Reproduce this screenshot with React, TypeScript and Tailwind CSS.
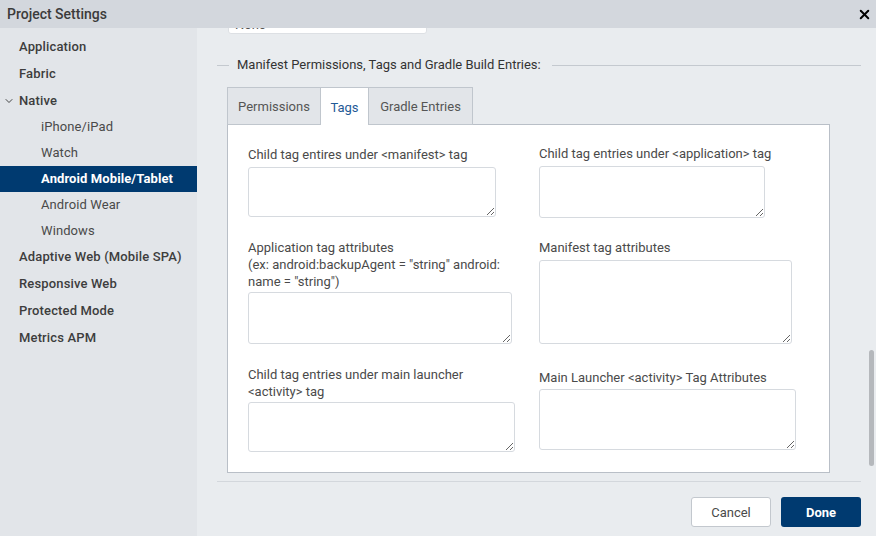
import { ChevronDown, X } from "lucide-react";

const font = { fontFamily: "Roboto, 'Liberation Sans', sans-serif" };

const topItems = ["Application", "Fabric"];
const nativeItems = ["iPhone/iPad", "Watch", "Android Mobile/Tablet", "Android Wear", "Windows"];
const bottomItems = ["Adaptive Web (Mobile SPA)", "Responsive Web", "Protected Mode", "Metrics APM"];

const Field = ({
  label,
  w,
  h,
  gap,
  top,
}: {
  label: React.ReactNode;
  w: string;
  h: string;
  gap: string;
  top: string;
}) => (
  <div className={`flex flex-col ${top}`}>
    <div className="text-[13px] leading-[17px] text-[#4a4a4a]">{label}</div>
    <textarea className={`${gap} ${w} ${h} border border-[#d6dadf] rounded-[3px] bg-white outline-none`} />
  </div>
);

const App = () => {
  return (
    <div style={font} className="w-[876px] h-[536px] flex flex-col overflow-hidden bg-[#e9ecef]">
      <div className="h-[28px] shrink-0 bg-[#d3d7dd] flex items-center justify-between pl-[7px] pr-[4px]">
        <span className="text-[14px] font-medium text-[#3b3b3b]">Project Settings</span>
        <X size={15} strokeWidth={3.2} className="text-black" />
      </div>

      <div className="flex flex-1 min-h-0">
        <div className="w-[197px] shrink-0 bg-[#e2e5e9] pt-[5px]">
          {topItems.map((t) => (
            <div key={t} className="h-[27px] flex items-center pl-[19px] text-[13px] font-medium tracking-[0.15px] text-[#3d3d3d]">
              {t}
            </div>
          ))}
          <div className="h-[27px] flex items-center pl-[3px] text-[13px] font-medium tracking-[0.15px] text-[#3d3d3d]">
            <ChevronDown size={12} strokeWidth={1.8} className="mr-[4px] text-[#333]" />
            Native
          </div>
          {nativeItems.map((t) =>
            t === "Android Mobile/Tablet" ? (
              <div key={t} className="h-[26px] flex items-center pl-[41px] text-[13px] font-bold tracking-[0.1px] text-white bg-[#003a70]">
                {t}
              </div>
            ) : (
              <div key={t} className="h-[26px] flex items-center pl-[41px] text-[13px] tracking-[0.1px] text-[#4a4a4a]">
                {t}
              </div>
            )
          )}
          <div className="-mt-px">
            {bottomItems.map((t) => (
              <div key={t} className="h-[27px] flex items-center pl-[19px] text-[13px] font-medium tracking-[0.15px] text-[#3d3d3d]">
                {t}
              </div>
            ))}
          </div>
        </div>

        <div className="flex-1 relative flex flex-col">
          <div className="ml-[31px] w-[199px] h-[6px] overflow-hidden">
            <div className="-mt-[12px] h-[18px] bg-white border border-[#dde0e4] rounded-[3px] px-[6px] text-[13px] leading-[16px] text-[#555]">
              None
            </div>
          </div>

          <div className="mt-[21px] ml-[20px] mr-[15px] h-[20px] flex items-center">
            <div className="w-[12px] h-px bg-[#c4c9cf]" />
            <span className="ml-[8px] mr-[11px] text-[13px] text-[#333]">
              Manifest Permissions, Tags and Gradle Build Entries:
            </span>
            <div className="flex-1 h-px bg-[#c4c9cf]" />
          </div>

          <div className="mt-[12px] ml-[30px] w-[603px]">
            <div className="flex h-[38px] relative z-10">
              <div className="w-[94px] border border-[#c0c6cd] bg-[#e2e5e9] flex items-center justify-center pt-px text-[13px] text-[#555]">
                Permissions
              </div>
              <div className="w-[47px] border-t border-[#c0c6cd] bg-white flex items-center justify-center pt-px text-[13px] text-[#1f5a96] h-[39px]">
                Tags
              </div>
              <div className="w-[105px] border border-[#c0c6cd] bg-[#e2e5e9] flex items-center justify-center pt-px text-[13px] text-[#555]">
                Gradle Entries
              </div>
            </div>
            <div className="-mt-px h-[349px] bg-white border border-[#b9bfc7] flex pl-[20px] pt-[21px]">
              <div className="w-[291px] flex flex-col">
                <Field label="Child tag entires under <manifest> tag" w="w-[248px]" h="h-[50px]" gap="mt-[4px]" top="" />
                <Field
                  label={
                    <>
                      Application tag attributes
                      <br />
                      (ex: android:backupAgent = "string" android:
                      <br />
                      name = "string")
                    </>
                  }
                  w="w-[264px]"
                  h="h-[52px]"
                  gap="mt-[2px]"
                  top="mt-[22px]"
                />
                <Field
                  label={
                    <>
                      Child tag entries under main launcher
                      <br />
                      &lt;activity&gt; tag
                    </>
                  }
                  w="w-[267px]"
                  h="h-[50px]"
                  gap="mt-[2px]"
                  top="mt-[22px]"
                />
              </div>
              <div className="flex flex-col -mt-px">
                <Field label="Child tag entries under <application> tag" w="w-[226px]" h="h-[52px]" gap="mt-[4px]" top="" />
                <Field label="Manifest tag attributes" w="w-[253px]" h="h-[84px]" gap="mt-[4px]" top="mt-[21px]" />
                <Field label="Main Launcher <activity> Tag Attributes" w="w-[257px]" h="h-[61px]" gap="mt-[3px]" top="mt-[25px]" />
              </div>
            </div>
          </div>

          <div className="mt-[8px] ml-[20px] mr-[15px] h-px bg-[#d3d7dc]" />

          <div className="mt-[15px] mr-[15px] flex justify-end gap-[10px]">
            <button className="w-[80px] h-[30px] bg-white border border-[#c3c8ce] rounded-[3px] pt-px text-[13px] text-[#4a4a4a]">
              Cancel
            </button>
            <button className="w-[80px] h-[30px] bg-[#003a70] rounded-[3px] pt-px text-[13px] font-bold text-white">
              Done
            </button>
          </div>

          <div className="absolute right-[2px] top-[322px] w-[5px] h-[116px] rounded-full bg-[#b5b8bc]" />
        </div>
      </div>
    </div>
  );
};

export default App;
